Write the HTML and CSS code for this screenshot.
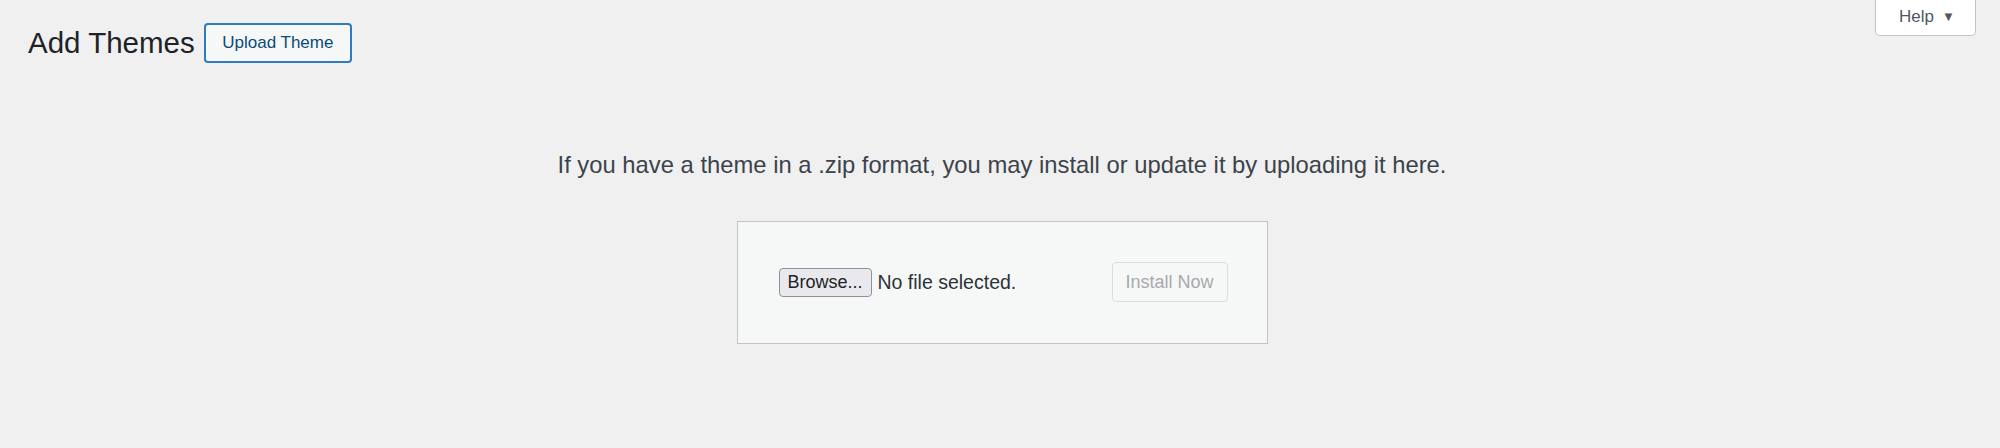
FILE: index.html
```html
<!DOCTYPE html>
<html lang="en">
<head>
<meta charset="utf-8">
<title>Add Themes</title>
<link rel="stylesheet" href="styles.css">
</head>
<body>
<div class="screen-meta-links">
  <button class="help-tab" type="button">Help <span class="help-arrow">▼</span></button>
</div>
<div class="wrap">
  <div class="title-row">
    <h1 class="page-title">Add Themes</h1>
    <a class="page-title-action" href="#">Upload Theme</a>
  </div>
  <div class="upload-theme">
    <p class="install-help">If you have a theme in a .zip format, you may install or update it by uploading it here.</p>
    <form class="upload-form">
      <div class="file-input">
        <span class="browse-btn">Browse...</span>
        <span class="file-status">No file selected.</span>
      </div>
      <button class="install-btn" type="button" disabled>Install Now</button>
    </form>
  </div>
</div>
</body>
</html>
```
FILE: styles.css
```css
html, body {
  margin: 0;
  padding: 0;
  background: #f0f0f1;
  height: 100%;
}
body {
  font-family: "Liberation Sans", Arial, sans-serif;
  color: #3c434a;
}
.screen-meta-links {
  float: right;
  margin-right: 24px;
}
.help-tab {
  display: flex;
  align-items: center;
  gap: 8px;
  box-sizing: border-box;
  width: 101px;
  height: 36px;
  padding: 0 0 2px 23px;
  background: #fff;
  border: 1px solid #c3c4c7;
  border-top: none;
  border-radius: 0 0 5px 5px;
  font-family: "Liberation Sans", Arial, sans-serif;
  font-size: 17px;
  color: #50575e;
}
.help-arrow {
  font-size: 13px;
  color: #50575e;
}
.wrap {
  padding: 23px 24px 0 28px;
}
.title-row {
  display: flex;
  align-items: center;
  gap: 9px;
}
.page-title {
  margin: 0;
  font-size: 29.5px;
  font-weight: 400;
  line-height: 40px;
  color: #1d2327;
}
.page-title-action {
  box-sizing: border-box;
  display: inline-flex;
  align-items: center;
  height: 40px;
  padding: 0 16.5px;
  border: 2px solid #2f7bbf;
  border-radius: 4px;
  background: #f6f7f7;
  color: #0a4b78;
  font-size: 17px;
  text-decoration: none;
}
.upload-theme {
  display: flex;
  flex-direction: column;
  align-items: center;
}
.install-help {
  margin: 87px 0 0;
  font-size: 23.8px;
  line-height: 30px;
  color: #3c434a;
  text-align: center;
}
.upload-form {
  box-sizing: border-box;
  display: flex;
  align-items: center;
  justify-content: space-between;
  width: 531px;
  margin-top: 41px;
  padding: 40px 39px 41px;
  background: #f6f7f7;
  border: 1px solid #c3c4c7;
}
.file-input {
  display: flex;
  align-items: center;
  gap: 6px;
  margin-left: 2px;
}
.browse-btn {
  box-sizing: border-box;
  display: inline-flex;
  align-items: center;
  justify-content: center;
  width: 93px;
  height: 29px;
  background: #e9e9ed;
  border: 1px solid #8f8f9d;
  border-radius: 4px;
  font-size: 18px;
  color: #1d2327;
}
.file-status {
  font-size: 19.5px;
  color: #2c3338;
}
.install-btn {
  box-sizing: border-box;
  width: 116px;
  height: 40px;
  padding: 0;
  background: #f6f7f7;
  border: 1px solid #dcdcde;
  border-radius: 4px;
  font-family: "Liberation Sans", Arial, sans-serif;
  font-size: 18px;
  color: #a7aaad;
}
```
